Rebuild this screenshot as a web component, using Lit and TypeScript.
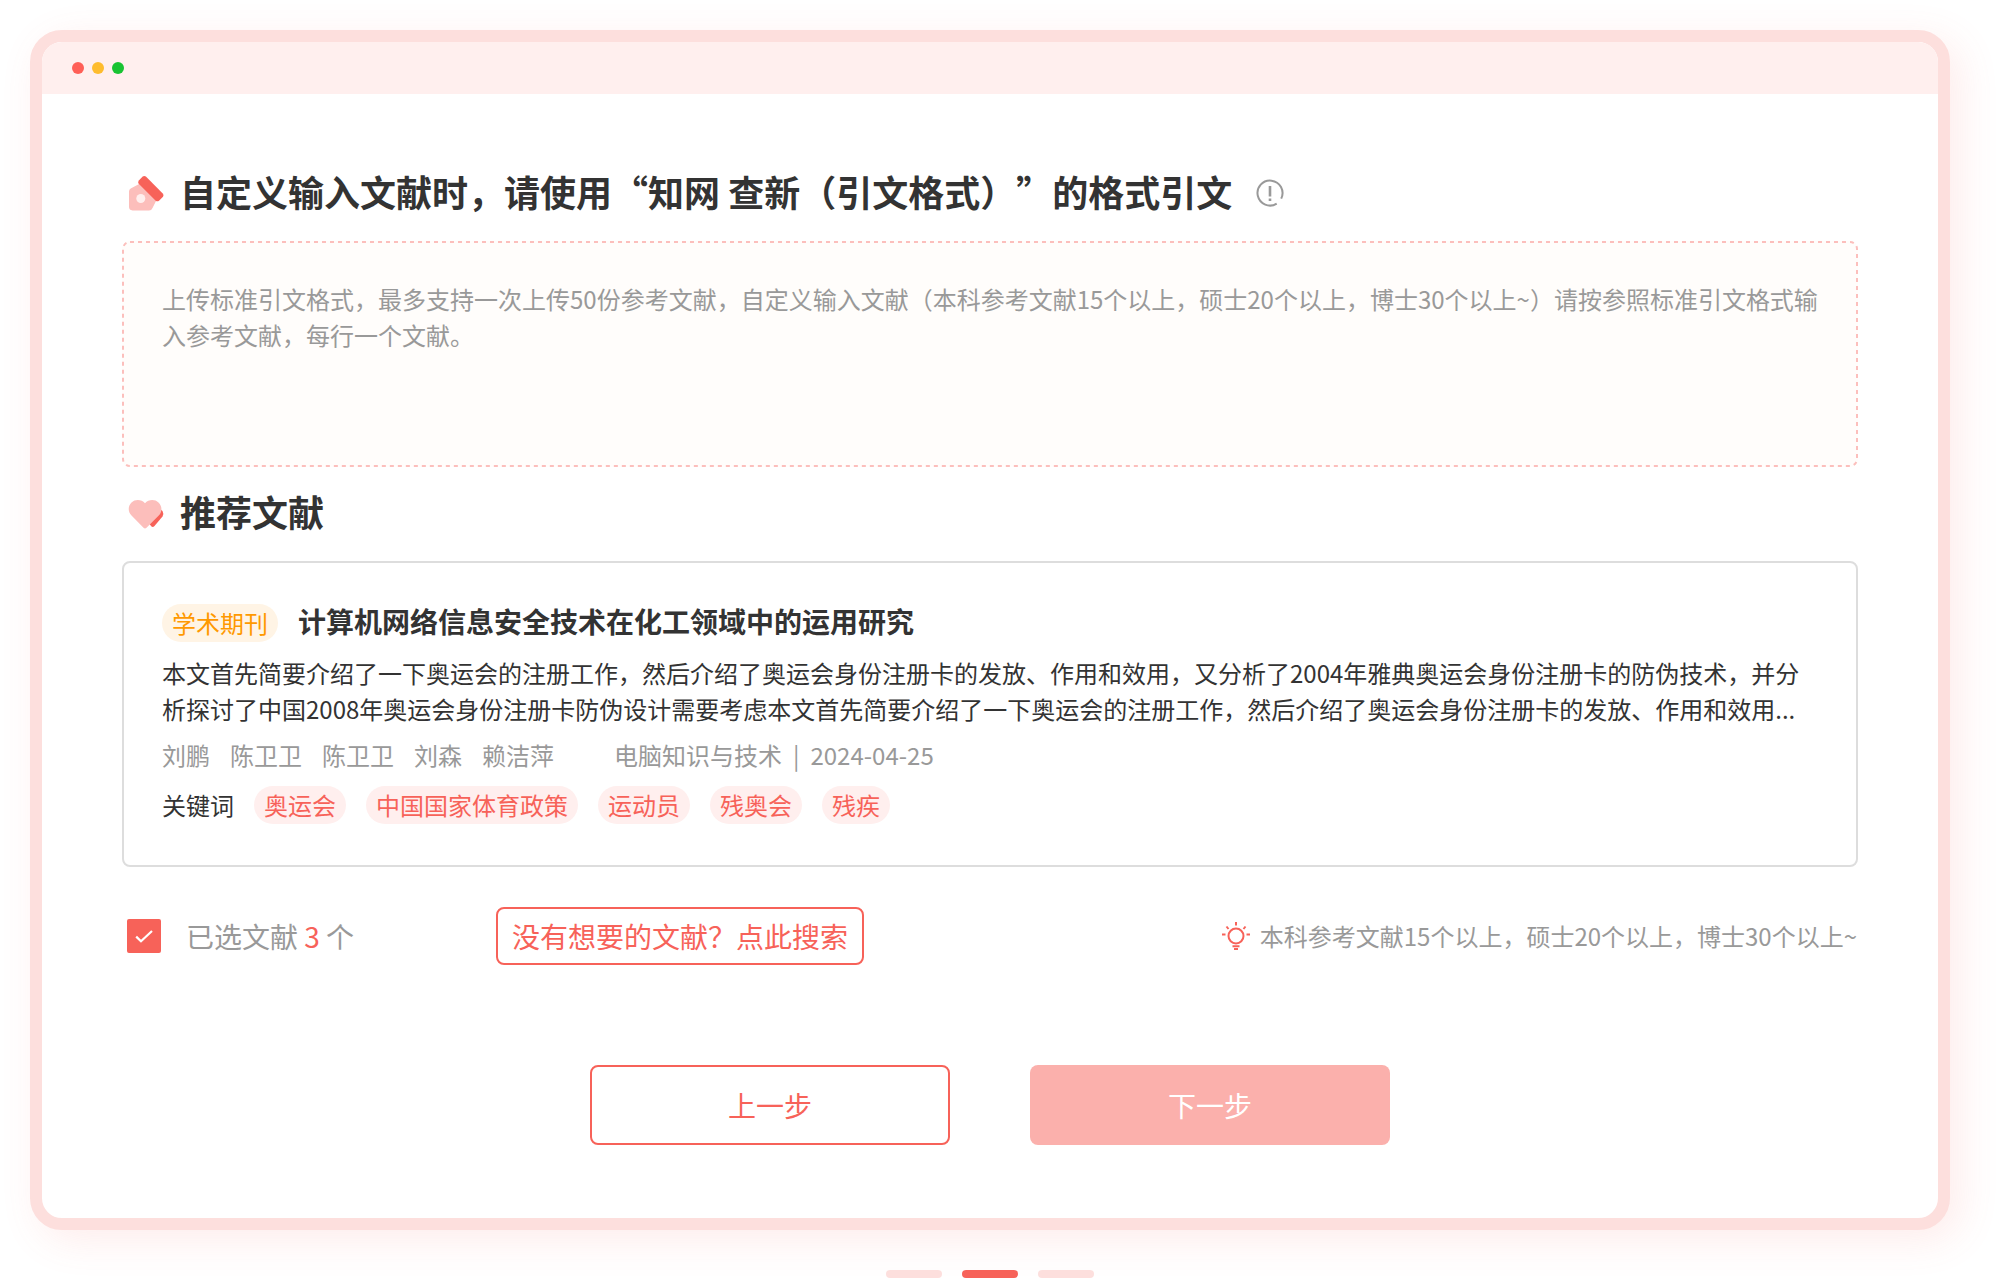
import { LitElement, html, css } from "lit";
import { customElement, state } from "lit/decorators.js";

@customElement("app-root")
export class AppRoot extends LitElement {
  static styles = css`
    :host {
      display: block;
      color: #333;
      background: #fff;
      font-family: "Noto Sans CJK SC", sans-serif;
      font-size: 24px;
      line-height: 36px;
      text-spacing-trim: space-all;
    }
    * {
      box-sizing: border-box;
    }
    h1, h2, h3, p {
      margin: 0;
    }
    button, input, textarea {
      font: inherit;
      margin: 0;
    }
    svg {
      display: block;
      flex: none;
    }
    .page {
      padding: 30px 50px 0 30px;
    }
    .window {
      border: 12px solid #fddfdd;
      border-radius: 32px;
      background: #fff;
      box-shadow: 10px 10px 40px rgba(247, 98, 89, 0.12);
    }
    .titlebar {
      display: flex;
      align-items: center;
      gap: 8px;
      height: 52px;
      padding: 0 30px;
      border-radius: 20px 20px 0 0;
      background: #ffefee;
    }
    .light {
      width: 12px;
      height: 12px;
      border-radius: 50%;
    }
    .red { background: #ff5f57; }
    .amber { background: #febc2e; }
    .green { background: #19c332; }
    .content {
      padding: 72px 80px 73px;
    }
    .heading {
      display: flex;
      align-items: center;
      gap: 16px;
      padding-left: 6px;
      margin-bottom: 21px;
    }
    .heading h1, .heading h2 {
      padding-bottom: 4px;
      font-size: 36px;
      line-height: 50px;
      font-weight: 700;
    }
    .info {
      display: flex;
      margin-left: 8px;
      padding: 0;
      border: 0;
      background: none;
    }
    .field {
      position: relative;
      margin-bottom: 19px;
    }
    .citations {
      display: block;
      width: 100%;
      height: 226px;
      padding: 40px;
      border: 0;
      border-radius: 8px;
      background: #fffdfb;
      color: #333;
      resize: none;
      outline: none;
    }
    .citations::placeholder {
      color: #999;
      opacity: 1;
    }
    .dashes {
      position: absolute;
      inset: 0;
      width: 100%;
      height: 100%;
      pointer-events: none;
    }
    .dashes rect {
      width: calc(100% - 2px);
      height: calc(100% - 2px);
      fill: none;
      stroke: #fcbfbc;
      stroke-width: 2px;
      stroke-dasharray: 4 4;
    }
    .card {
      padding: 40px 38px 41px;
      border: 2px solid #ddd;
      border-radius: 8px;
    }
    .row {
      display: flex;
      align-items: center;
      gap: 20px;
    }
    .pill {
      padding: 1px 10px;
      border-radius: 19px;
      background: #ffefee;
      color: #f76259;
    }
    .kind {
      background: #fff4e5;
      color: #ff9900;
    }
    .card h3 {
      padding-bottom: 4px;
      font-size: 28px;
      line-height: 36px;
      font-weight: 700;
    }
    .abstract {
      margin: 12px 0 10px;
    }
    .meta {
      color: #999;
      margin-bottom: 13px;
    }
    .source {
      display: flex;
      gap: 11px;
      margin-left: 40px;
    }
    .toolbar {
      display: flex;
      align-items: center;
      margin-top: 40px;
      padding: 0 1px 0 5px;
      font-size: 28px;
      line-height: 42px;
    }
    .selected {
      display: flex;
      align-items: center;
      gap: 25px;
      color: #999;
    }
    .tick {
      display: grid;
      place-items: center;
    }
    .tick > * {
      grid-area: 1 / 1;
    }
    .tick svg {
      pointer-events: none;
    }
    .tick input {
      appearance: none;
      width: 34px;
      height: 34px;
      border: 2px solid #f76259;
      border-radius: 2px;
    }
    .tick input:checked {
      background: #f76259;
    }
    .count {
      color: #f76259;
    }
    .outline {
      border: 2px solid #f76259;
      border-radius: 8px;
      background: #fff;
      color: #f76259;
    }
    .search {
      margin-left: 142px;
      padding: 6px 14px;
    }
    .tip {
      display: flex;
      align-items: center;
      gap: 10px;
      margin-left: auto;
      color: #999;
      font-size: 24px;
    }
    .steps {
      display: flex;
      justify-content: center;
      gap: 80px;
      margin-top: 100px;
      font-size: 28px;
    }
    .step {
      width: 360px;
      height: 80px;
      padding: 0;
      border-radius: 8px;
    }
    .next {
      border: 0;
      background: #fbb0ac;
      color: #fff;
    }
    .pager {
      display: flex;
      justify-content: center;
      gap: 20px;
      margin-top: 40px;
    }
    .dot {
      width: 56px;
      height: 8px;
      padding: 0;
      border: 0;
      border-radius: 4px;
      background: #fddfdd;
    }
    .dot.current {
      background: #f76259;
    }
  `;

  @state() private slide = 1;

  private authors = ["刘鹏", "陈卫卫", "陈卫卫", "刘森", "赖洁萍"];
  private keywords = ["奥运会", "中国国家体育政策", "运动员", "残奥会", "残疾"];

  render() {
    return html`
      <div class="page">
        <main class="window">
          <div class="titlebar">
            <span class="light red"></span>
            <span class="light amber"></span>
            <span class="light green"></span>
          </div>
          <div class="content">
            <div class="heading">
              <svg width="36" height="36" viewBox="0 0 36 36" aria-hidden="true">
                <path fill="#fcbebb" d="M4.500 35.500Q1 35 1 32V16.500Q1 14.500 2.700 13.500L13 8L29 24L24.500 33Q23.500 35.500 21 35.500Z" />
                <circle cx="12.800" cy="23.500" r="4.500" fill="#ffefee" />
                <path fill="#f76259" d="M10.800 5.400L14.700 1.500Q16.300 0.300 17.900 1.600L35 18.700Q36 20.300 35 21.700L31 25.700Q29.300 27 27.700 25.700L10.700 8.700Q9.500 7 10.800 5.400Z" />
              </svg>
              <h1><label for="citations">自定义输入文献时，请使用“知网 查新（引文格式）”的格式引文</label></h1>
              <button class="info" type="button" aria-label="引文格式">
                <svg width="28" height="28" viewBox="0 0 28 28" fill="none" stroke="#999" stroke-width="2" aria-hidden="true">
                  <path d="M20.700 24.600A12.500 12.500 0 1 1 25.200 19.600" />
                  <path d="M14 7V17.500M14 19.500V22" stroke-width="2.600" />
                </svg>
              </button>
            </div>
            <div class="field">
              <textarea
                id="citations"
                class="citations"
                placeholder="上传标准引文格式，最多支持一次上传50份参考文献，自定义输入文献（本科参考文献15个以上，硕士20个以上，博士30个以上~）请按参照标准引文格式输入参考文献，每行一个文献。"
              ></textarea>
              <svg class="dashes" aria-hidden="true"><rect x="1" y="1" rx="7" /></svg>
            </div>

            <div class="heading">
              <svg width="36" height="36" viewBox="0 0 36 36" aria-hidden="true">
                <path fill="#f76259" d="M19 26L32 14L34.500 16Q36 18.500 34.500 21.500L26.500 31Q25 32.600 23.500 31.600Z" />
                <path fill="#fcbebb" d="M17 8.300C20.500 4.200 27 4 30.500 7.500C34.300 11.200 34.300 16.600 31 20.200L18.500 32.800Q17 34.100 15.500 32.800L3.500 20.500C-0.200 16.600 -0.200 11.200 3.500 7.500C7.200 4 13.500 4.200 17 8.300Z" />
              </svg>
              <h2>推荐文献</h2>
            </div>
            <article class="card">
              <div class="row">
                <span class="pill kind">学术期刊</span>
                <h3>计算机网络信息安全技术在化工领域中的运用研究</h3>
              </div>
              <p class="abstract">
                本文首先简要介绍了一下奥运会的注册工作，然后介绍了奥运会身份注册卡的发放、作用和效用，又分析了2004年雅典奥运会身份注册卡的防伪技术，并分析探讨了中国2008年奥运会身份注册卡防伪设计需要考虑本文首先简要介绍了一下奥运会的注册工作，然后介绍了奥运会身份注册卡的发放、作用和效用...
              </p>
              <div class="row meta">
                ${this.authors.map((a) => html`<span>${a}</span>`)}
                <span class="source"><span>电脑知识与技术</span><span>|</span><time>2024-04-25</time></span>
              </div>
              <div class="row">
                <span>关键词</span>
                ${this.keywords.map((k) => html`<span class="pill">${k}</span>`)}
              </div>
            </article>

            <div class="toolbar">
              <div class="selected">
                <span class="tick">
                  <input id="selected" type="checkbox" checked />
                  <svg width="34" height="34" viewBox="0 0 34 34" fill="none" stroke="#fff" stroke-width="2.200" aria-hidden="true">
                    <path d="M9.200 17.600L14 22.300L25 12" />
                  </svg>
                </span>
                <label for="selected">已选文献 <span class="count">3</span> 个</label>
              </div>
              <button class="outline search" type="button">没有想要的文献？点此搜索</button>
              <p class="tip">
                <svg width="28" height="28" viewBox="0 0 28 28" fill="none" stroke="#f76259" stroke-width="2" aria-hidden="true">
                  <circle cx="14" cy="14" r="7.500" />
                  <path d="M14 0V3.500M0 12.500H3.500M24.500 12.500H28M4.500 4.500L6.500 7M23.500 4.500L21.500 7M10.500 24.200H17.500M12 27H16" />
                </svg>
                <span>本科参考文献15个以上，硕士20个以上，博士30个以上~</span>
              </p>
            </div>

            <div class="steps">
              <button class="step outline" type="button">上一步</button>
              <button class="step next" type="button">下一步</button>
            </div>
          </div>
        </main>
        <nav class="pager">
          ${[0, 1, 2].map(
            (i) => html`<button
              class="dot ${i === this.slide ? "current" : ""}"
              type="button"
              aria-label=${i + 1}
              @click=${() => (this.slide = i)}
            ></button>`
          )}
        </nav>
      </div>
    `;
  }
}
